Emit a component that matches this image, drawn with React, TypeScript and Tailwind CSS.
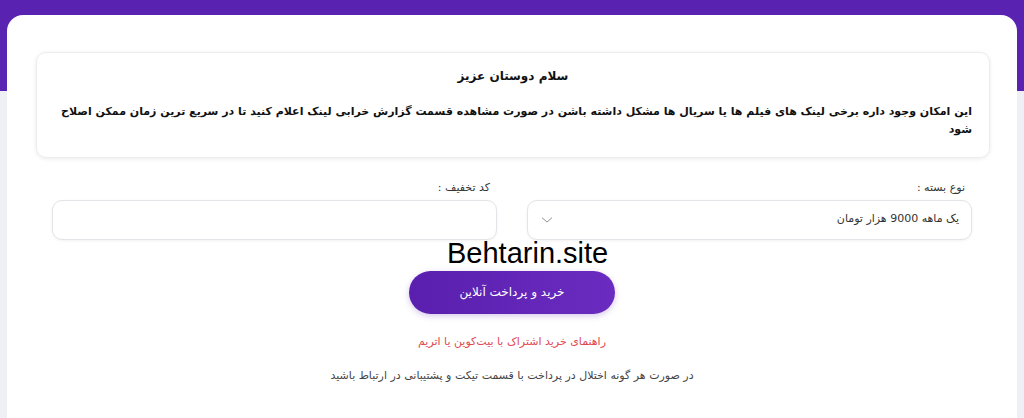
import React from 'react';

export default function App() {
  return (
    <div className="min-h-[418px] bg-[linear-gradient(to_bottom,#5a22b0_91px,#eef0f5_91px)] pt-[15px] px-[7px] font-['DejaVu_Sans',sans-serif]">
      <div dir="rtl" className="relative bg-white rounded-[16px] min-h-[420px] pt-[37px] pb-8">
        {/* notice box */}
        <div className="mx-[27px] ml-[29px] rounded-[10px] border border-[#ececf0] shadow-[0_1px_4px_rgba(0,0,0,0.08)] px-[17px] pt-[13px] pb-[18px] text-[#111]">
          <p className="text-center text-[12px] font-bold leading-[20px]">سلام دوستان عزیز</p>
          <p className="mt-[17px] text-[11px] font-bold leading-[18px] text-right">
            این امکان وجود داره برخی لینک های فیلم ها یا سریال ها مشکل داشته باشن در صورت مشاهده قسمت گزارش خرابی لینک اعلام  کنید تا در سریع ترین زمان ممکن اصلاح شود
          </p>
        </div>

        {/* form */}
        <div className="grid grid-cols-2 gap-[30px] px-[45px] mt-[22px]">
          <div>
            <label className="block text-[11px] text-[#333] pr-[7px] mb-[3px]">نوع بسته :</label>
            <div className="h-[40px] rounded-[10px] border border-[#e3e3e8] shadow-[0_1px_3px_rgba(0,0,0,0.06)] flex items-center justify-between pr-[12px] pl-[12px] text-[11px] text-[#333]">
              <span>یک ماهه 9000 هزار تومان</span>
              <svg width="14" height="14" viewBox="0 0 24 24" fill="none" stroke="#8a8a8a" strokeWidth="1.6" strokeLinecap="round" strokeLinejoin="round">
                <path d="M4 8.5l8 7 8-7" />
              </svg>
            </div>
          </div>
          <div>
            <label className="block text-[11px] text-[#333] pr-[7px] mb-[3px]">کد تخفیف :</label>
            <input className="w-full h-[40px] rounded-[10px] border border-[#e3e3e8] shadow-[0_1px_3px_rgba(0,0,0,0.06)] outline-none px-3 text-[12px]" />
          </div>
        </div>

        {/* watermark */}
        <div dir="ltr" className="absolute left-[440px] top-[222px] text-[29px] leading-[32px] text-black font-['Liberation_Sans',sans-serif]">
          Behtarin.site
        </div>

        <div className="flex flex-col items-center mt-[31px]">
          <button className="w-[206px] h-[43px] rounded-full bg-[linear-gradient(90deg,#5a1fae,#6a2cc0)] text-white text-[12px] shadow-[0_2px_6px_rgba(90,34,176,0.25)]">
            خرید و پرداخت آنلاین
          </button>
          <p className="mt-[20px] text-[11px] text-[#e04852]">راهنمای خرید اشتراک با بیت‌کوین یا اتریم</p>
          <p className="mt-[18px] text-[11px] text-[#444]">در صورت هر گونه اختلال در پرداخت با قسمت تیکت و پشتیبانی در ارتباط باشید</p>
        </div>
      </div>
    </div>
  );
}
